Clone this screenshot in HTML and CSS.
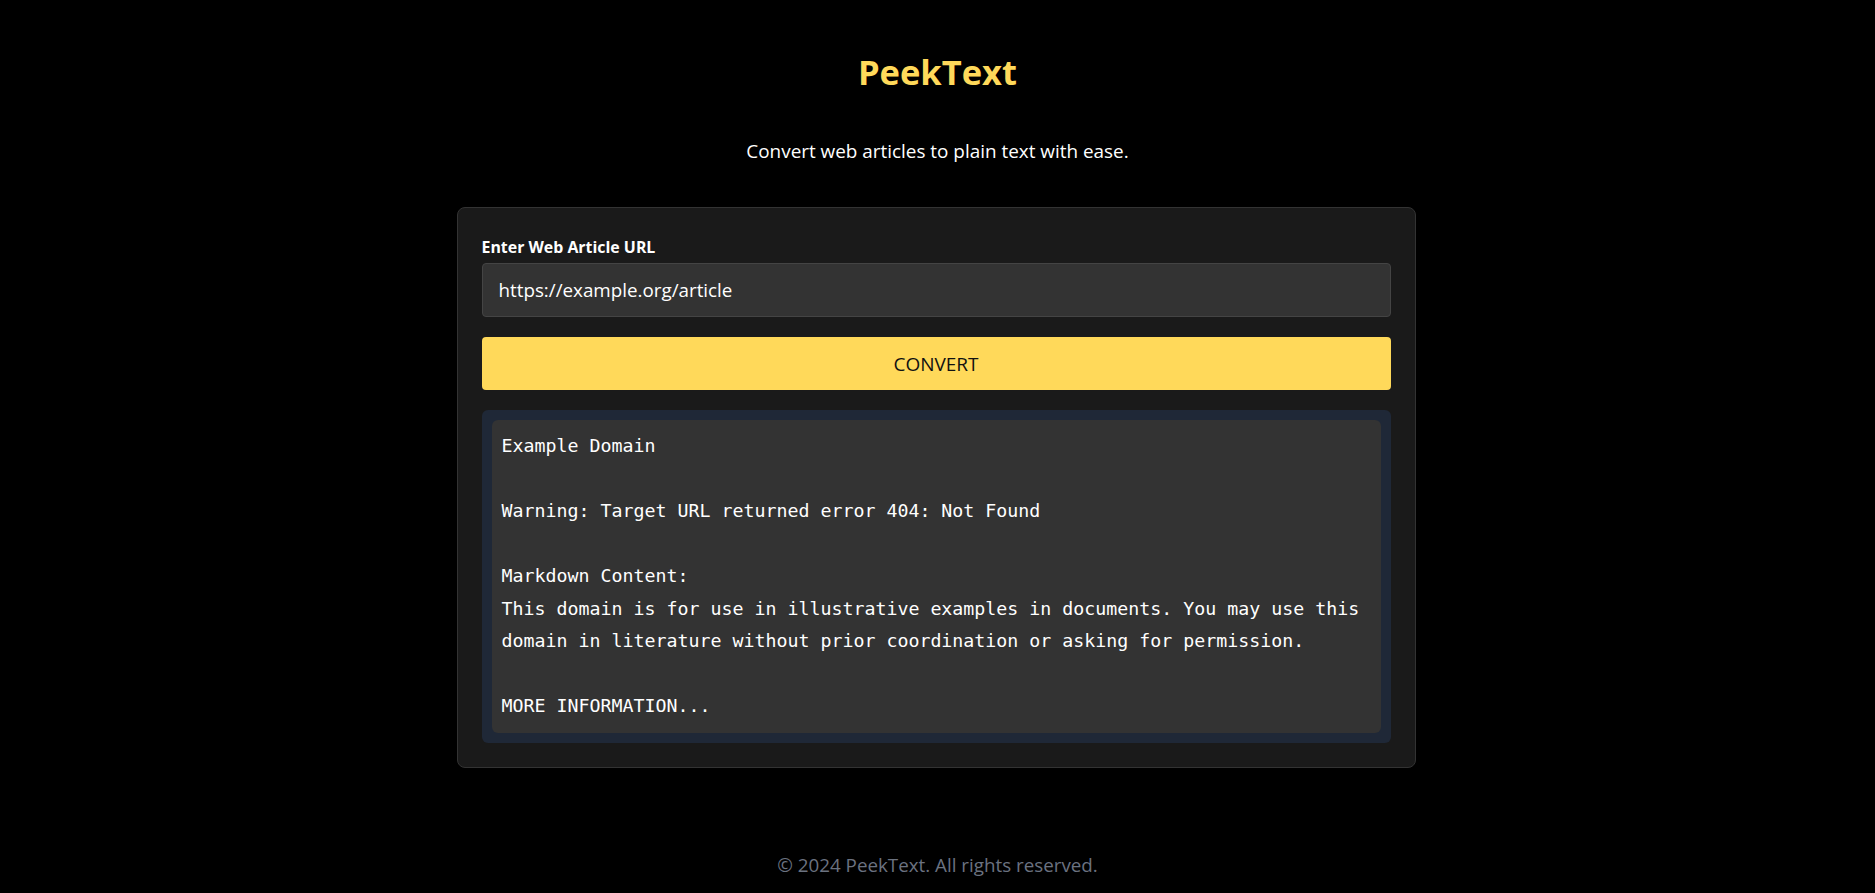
FILE: index.html
```html
<!DOCTYPE html>
<html lang="en">
<head>
<meta charset="utf-8">
<title>PeekText</title>
<link rel="stylesheet" href="styles.css">
</head>
<body>
<div class="page">
  <header class="header">
    <h1 class="title">PeekText</h1>
    <p class="subtitle">Convert web articles to plain text with ease.</p>
  </header>
  <main class="card">
    <label class="label" for="url">Enter Web Article URL</label>
    <input class="input" id="url" type="text" value="https://example.org/article">
    <button class="button" type="button">Convert</button>
    <div class="output">
      <pre class="output-text">Example Domain

Warning: Target URL returned error 404: Not Found

Markdown Content:
This domain is for use in illustrative examples in documents. You may use this domain in literature without prior coordination or asking for permission.

MORE INFORMATION...</pre>
    </div>
  </main>
  <footer class="footer">© 2024 PeekText. All rights reserved.</footer>
</div>
</body>
</html>
```

FILE: styles.css
```css
* { box-sizing: border-box; }
html, body { margin: 0; padding: 0; background: #000; }
body {
  font-family: "Open Sans", "Noto Sans", sans-serif;
  color: #fff;
}
.page {
  display: flex;
  flex-direction: column;
  align-items: center;
}
.header { text-align: center; }
.title {
  margin: 48px 0 0;
  font-size: 34.5px;
  line-height: 48px;
  font-weight: 700;
  color: #ffd95a;
}
.subtitle {
  margin: 42px 0 0;
  font-size: 18.9px;
  line-height: 26px;
  color: #fff;
}
.card {
  margin: 43px 3px 0 0;
  width: 959px;
  background: #1a1a1a;
  border: 1px solid #333;
  border-radius: 8px;
  padding: 27px 24px 24px;
  display: flex;
  flex-direction: column;
}
.label {
  font-size: 15.9px;
  line-height: 24px;
  font-weight: 700;
  margin-bottom: 4px;
}
.input {
  height: 54px;
  background: #333;
  border: 1px solid #444;
  border-radius: 4px;
  padding: 0 16px;
  color: #fff;
  font-family: inherit;
  font-size: 18.8px;
  outline: none;
}
.button {
  margin-top: 20px;
  height: 53px;
  background: #ffd95a;
  border: none;
  border-radius: 4px;
  color: #111;
  font-family: inherit;
  font-size: 19px;
  text-transform: uppercase;
}
.output {
  margin-top: 20px;
  background: #1f2837;
  border-radius: 6px;
  padding: 10px;
}
.output-text {
  margin: 0;
  background: #333;
  border-radius: 6px;
  padding: 10px;
  font-family: "DejaVu Sans Mono", monospace;
  font-size: 18.27px;
  line-height: 32.5px;
  white-space: pre-wrap;
  color: #fff;
}
.footer {
  margin-top: 84px;
  font-size: 18.8px;
  line-height: 26px;
  color: #6b7280;
}
```
